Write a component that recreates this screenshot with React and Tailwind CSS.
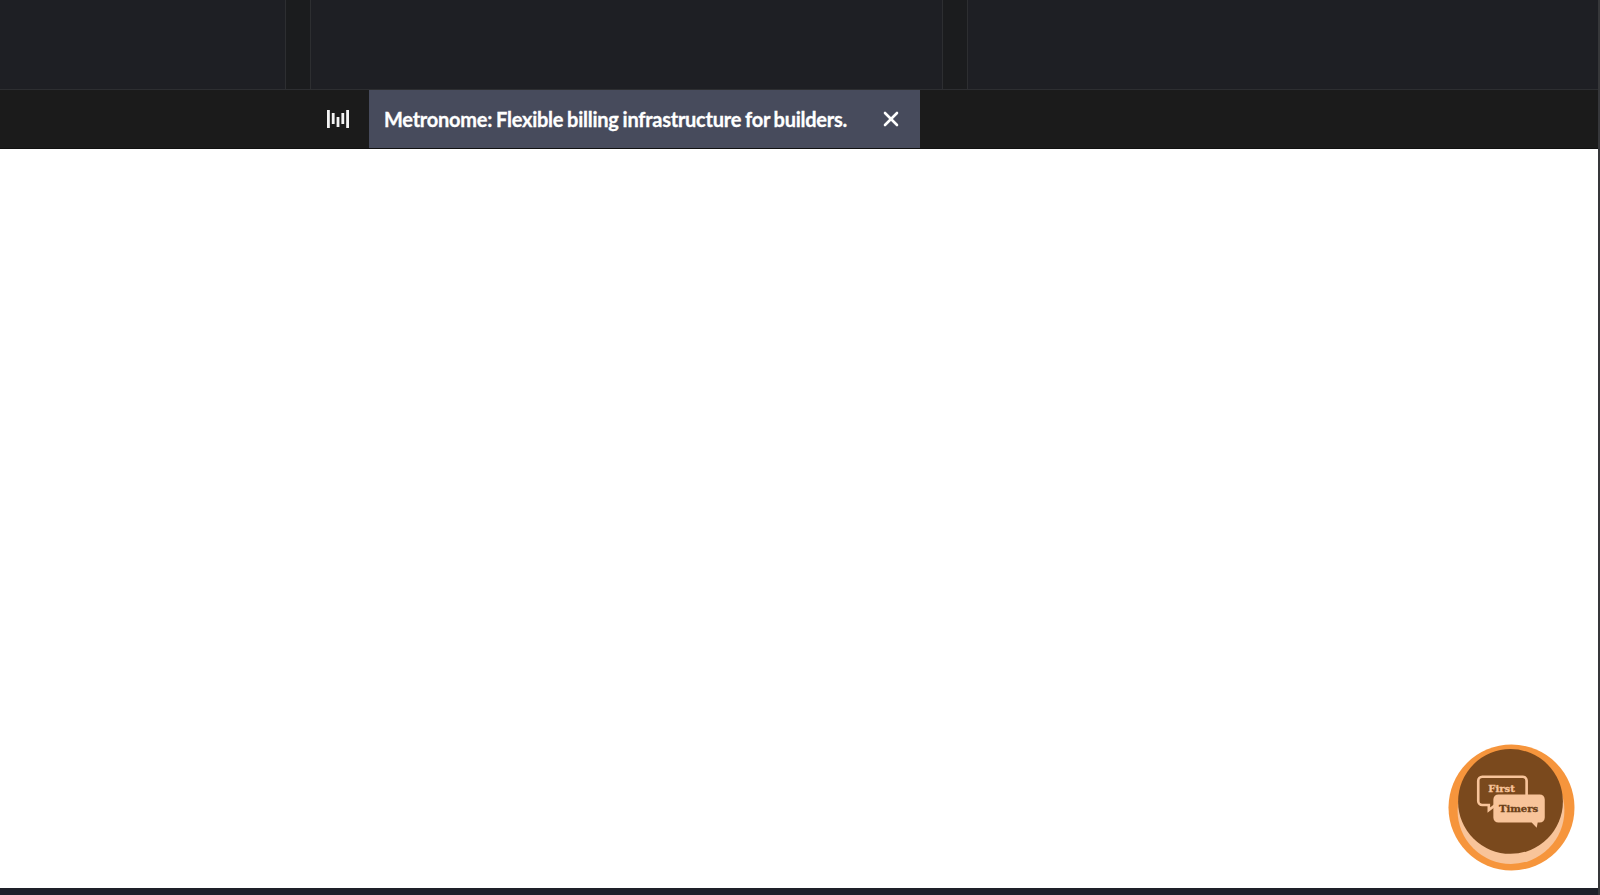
import React from 'react';
import { X } from 'lucide-react';

const MetronomeMark = () => (
  <svg width="22" height="18" viewBox="0 0 22 18" fill="#f4f4f4">
    <rect x="0" y="0" width="2.8" height="18" />
    <rect x="4.8" y="3" width="2.8" height="11" />
    <rect x="9.6" y="7" width="2.8" height="10" />
    <rect x="14.4" y="3" width="2.8" height="11" />
    <rect x="19.2" y="0" width="2.8" height="18" />
  </svg>
);

const FirstTimersBadge = () => (
  <svg width="127" height="127" viewBox="0 0 126 126" className="font-['DejaVu_Serif',serif] font-bold">
    <circle cx="63" cy="63" r="62.5" fill="#f6953c" />
    <circle cx="62.5" cy="66" r="53" fill="#f8c49a" />
    <circle cx="62" cy="57" r="52" fill="#7a491d" />
    <path d="M34 32.5h40a4 4 0 0 1 4 4v20a4 4 0 0 1-4 4H47l-6.5 5v-5H34a4 4 0 0 1-4-4v-20a4 4 0 0 1 4-4z" fill="#7a491d" stroke="#f8c49a" strokeWidth="2.6" />
    <path d="M50 50h41a5 5 0 0 1 5 5v18a5 5 0 0 1-5 5h-2l-1 5-5-5H50a5 5 0 0 1-5-5V55a5 5 0 0 1 5-5z" fill="#f8c49a" />
    <text x="40" y="48" fontSize="10" fill="#f8c49a" stroke="#f8c49a" strokeWidth="0.3">First</text>
    <text x="50.5" y="67.5" fontSize="10" fill="#6b3f18" stroke="#6b3f18" strokeWidth="0.3">Timers</text>
  </svg>
);

export default function App() {
  return (
    <div className="relative flex h-[895px] w-full overflow-hidden bg-white font-['Lato',sans-serif]">
      <div className="flex min-w-0 flex-1 flex-col">
        <div className="flex h-[90px] border-b border-[#2d2e31] bg-[#1e1f24]">
          <div className="w-[286px] border-r border-[#2d2e31]" />
          <div className="w-[25px] border-r border-[#2d2e31] bg-[#1b1c1e]" />
          <div className="w-[632px] border-r border-[#2d2e31]" />
          <div className="w-[25px] border-r border-[#2d2e31] bg-[#1b1c1e]" />
          <div className="flex-1" />
        </div>
        <div className="flex h-[59px] items-stretch border-b border-[#111] bg-[#1b1b1b]">
          <div className="flex w-[369px] items-center justify-end pr-[20px]">
            <MetronomeMark />
          </div>
          <div className="flex w-[551px] items-center justify-between bg-[#474b5c] pl-[15px] pr-[17px]">
            <span className="pb-[1px] text-[20px] font-bold tracking-[-0.25px] [word-spacing:-0.7px] text-white [-webkit-text-stroke:0.3px_white]">
              Metronome: Flexible billing infrastructure for builders.
            </span>
            <X size={24} strokeWidth={2.6} className="text-white" />
          </div>
        </div>
        <div className="flex-1 bg-white" />
        <div className="h-[7px] bg-[#1e2029]" />
      </div>
      <div className="w-[2px] bg-[#36373a]" />
      <div className="absolute left-[1448px] top-[744px]">
        <FirstTimersBadge />
      </div>
    </div>
  );
}
